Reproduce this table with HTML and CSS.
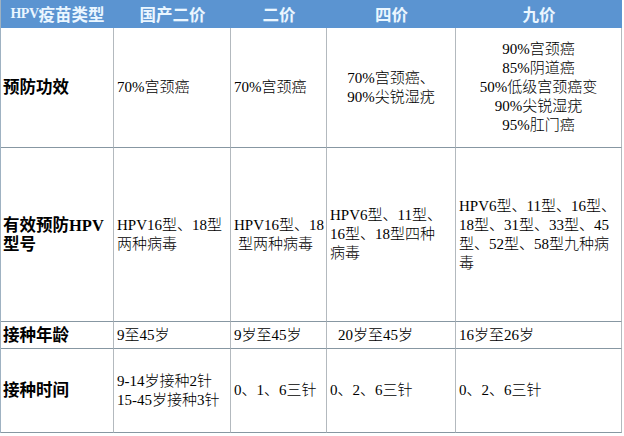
FILE: index.html
```html
<!DOCTYPE html>
<html lang="zh-CN">
<head>
<meta charset="utf-8">
<title>HPV疫苗类型</title>
<link rel="stylesheet" href="styles.css">
</head>
<body>
<div class="table">
  <div class="hd"><span class="lat">HPV</span>疫苗类型</div>
  <div class="hd">国产二价</div>
  <div class="hd">二价</div>
  <div class="hd">四价</div>
  <div class="hd">九价</div>

  <div class="cell label"><div>预防功效</div></div>
  <div class="cell"><div>70%宫颈癌</div></div>
  <div class="cell"><div>70%宫颈癌</div></div>
  <div class="cell center-block"><div>70%宫颈癌、<br>90%尖锐湿疣</div></div>
  <div class="cell centered"><div>90%宫颈癌<br>85%阴道癌<br>50%低级宫颈癌变<br>90%尖锐湿疣<br>95%肛门癌</div></div>

  <div class="cell label"><div>有效预防HPV<br>型号</div></div>
  <div class="cell"><div>HPV16型、18型<br>两种病毒</div></div>
  <div class="cell"><div>HPV16型、18<br><span class="ind-half"></span>型两种病毒</div></div>
  <div class="cell"><div>HPV6型、11型、<br>16型、18型四种<br>病毒</div></div>
  <div class="cell"><div>HPV6型、11型、16型、<br>18型、31型、33型、45<br>型、52型、58型九种病<br>毒</div></div>

  <div class="cell label"><div>接种年龄</div></div>
  <div class="cell"><div>9至45岁</div></div>
  <div class="cell"><div>9岁至45岁</div></div>
  <div class="cell"><div><span class="ind"></span>20岁至45岁</div></div>
  <div class="cell"><div>16岁至26岁</div></div>

  <div class="cell label"><div>接种时间</div></div>
  <div class="cell"><div>9-14岁接种2针<br>15-45岁接种3针</div></div>
  <div class="cell"><div>0、1、6三针</div></div>
  <div class="cell"><div>0、2、6三针</div></div>
  <div class="cell"><div>0、2、6三针</div></div>
</div>
</body>
</html>
```

FILE: styles.css
```css
html, body {
  margin: 0;
  padding: 0;
  background: #ffffff;
}

body {
  width: 624px;
  height: 436px;
  overflow: hidden;
}

.table {
  display: grid;
  grid-template-columns: 113px 117px 96px 129px 166px;
  grid-template-rows: 28px 120px 174px 27px 84px;
  width: 622px;
  border-left: 1px solid #9fb2c2;
  font-family: "Liberation Serif", "Noto Sans CJK SC", serif;
  font-size: 15px;
  color: #000000;
}

.hd {
  background: #5b94d1;
  color: #eaf6ff;
  font-family: "Liberation Serif", "Noto Sans CJK SC", serif;
  font-weight: 700;
  font-size: 16.5px;
  display: flex;
  align-items: center;
  justify-content: center;
  white-space: nowrap;
  padding-bottom: 1px;
  box-sizing: border-box;
}

.hd .lat {
  font-size: 14px;
  letter-spacing: -0.5px;
}

.cell {
  display: flex;
  align-items: center;
  box-sizing: border-box;
  border-right: 1px solid #b3b9be;
  border-bottom: 1px solid #8797a2;
  padding-left: 3px;
  line-height: 19px;
  white-space: nowrap;
  font-weight: 300;
}

.label {
  font-family: "Liberation Serif", "Noto Sans CJK SC", serif;
  font-weight: 700;
  font-size: 16.5px;
  line-height: 19px;
  padding-left: 2px;
  color: #000000;
}

.center-block {
  justify-content: center;
  padding-left: 0;
  text-align: left;
}

.centered {
  justify-content: center;
  text-align: center;
  padding-left: 0;
}

.ind {
  display: inline-block;
  width: 8px;
}

.ind-half {
  display: inline-block;
  width: 4px;
}
```
